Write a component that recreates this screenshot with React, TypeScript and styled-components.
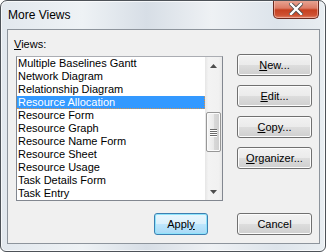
import styled, { createGlobalStyle } from 'styled-components'

const GlobalStyle = createGlobalStyle`
  html, body {
    margin: 0;
    padding: 0;
    background: #ffffff;
  }
  body {
    font-family: 'Liberation Sans', Arial, sans-serif;
    font-size: 11px;
    color: #000;
  }
`

const Window = styled.div`
  box-sizing: border-box;
  width: 326px;
  height: 252px;
  border: 1px solid #4d5258;
  border-radius: 7px 7px 6px 6px;
  background: linear-gradient(
    to right,
    #e2e8ee 0%,
    #eef2f5 25%,
    #d7dee6 45%,
    #eef1f4 65%,
    #dde4eb 85%,
    #e9eef2 100%
  );
  box-shadow: inset 0 0 0 1px rgba(255, 255, 255, 0.7);
  display: flex;
  flex-direction: column;
  overflow: hidden;
`

const TitleBar = styled.div`
  height: 28px;
  display: flex;
  justify-content: space-between;
  align-items: flex-start;
  padding-left: 7px;
`

const Title = styled.span`
  margin-top: 7px;
  font-size: 12px;
  color: #000;
`

const CloseButton = styled.div`
  box-sizing: border-box;
  width: 46px;
  height: 19px;
  margin-right: 6px;
  margin-top: -1px;
  border: 1px solid #6b2a1f;
  border-top: none;
  border-radius: 0 0 5px 5px;
  background: linear-gradient(
    to bottom,
    #e8a897 0%,
    #dc7c66 45%,
    #c6401f 55%,
    #cf5233 85%,
    #e0866a 100%
  );
  box-shadow: inset 0 0 0 1px rgba(255, 210, 200, 0.5);
  display: flex;
  align-items: center;
  justify-content: center;
`

const Client = styled.div`
  flex: 1;
  margin: 0 5px 7px 6px;
  border: 1px solid #8d949c;
  background: #f0f0f0;
  padding: 7px 6px 0 6px;
  display: flex;
  flex-direction: column;
`

const TopRow = styled.div`
  display: flex;
  align-items: flex-start;
`

const LeftColumn = styled.div`
  display: flex;
  flex-direction: column;
`

const Label = styled.div`
  line-height: 15px;
  height: 15px;
  margin-bottom: 4px;
`

const ListBox = styled.div`
  box-sizing: border-box;
  width: 207px;
  height: 145px;
  margin-left: 2px;
  border: 1px solid #828790;
  border-top-color: #abadb3;
  background: #ffffff;
  display: flex;
`

const Items = styled.div`
  flex: 1;
  display: flex;
  flex-direction: column;
`

const Item = styled.div<{ $selected?: boolean }>`
  box-sizing: border-box;
  height: 13px;
  line-height: 13px;
  padding-left: 1px;
  white-space: nowrap;
  color: ${({ $selected }) => ($selected ? '#ffffff' : '#000000')};
  background: ${({ $selected }) => ($selected ? '#3399ff' : 'transparent')};
  border: 1px dotted ${({ $selected }) => ($selected ? '#d8924a' : 'transparent')};
  border-left: none;
  border-top: none;
  line-height: 12px;
`

const ScrollBar = styled.div`
  width: 17px;
  display: flex;
  flex-direction: column;
  background: linear-gradient(to right, #e6e6e6 0%, #f3f3f3 20%, #f1f1f1 80%, #e8e8e8 100%);
`

const ArrowCell = styled.div`
  height: 17px;
  display: flex;
  align-items: center;
  justify-content: center;
`

const Track = styled.div`
  flex: 1;
  display: flex;
  flex-direction: column;
`

const Thumb = styled.div`
  box-sizing: border-box;
  margin-top: 38px;
  margin-left: 1px;
  width: 15px;
  height: 40px;
  border: 1px solid #979797;
  border-radius: 2px;
  background: linear-gradient(to right, #f6f6f6 0%, #eaeaea 50%, #d9d9d9 51%, #cfcfcf 100%);
  box-shadow: inset 0 0 0 1px #fbfbfb;
  display: flex;
  flex-direction: column;
  align-items: center;
  justify-content: center;
  gap: 1px;
`

const Grip = styled.div`
  width: 7px;
  height: 1px;
  background: #6a6a6a;
  box-shadow: 0 1px 0 #ffffff;
`

const ButtonColumn = styled.div`
  display: flex;
  flex-direction: column;
  gap: 9px;
  margin-left: 14px;
  margin-top: 17px;
`

const Button = styled.div<{ $width?: number; $primary?: boolean }>`
  box-sizing: border-box;
  width: ${({ $width }) => $width ?? 75}px;
  height: 22px;
  border: 1px solid ${({ $primary }) => ($primary ? '#3c7fb1' : '#707070')};
  border-radius: 3px;
  background: ${({ $primary }) =>
    $primary
      ? 'linear-gradient(to bottom, #eaf6fd 0%, #d9f0fc 50%, #bee6fd 51%, #a7d9f5 100%)'
      : 'linear-gradient(to bottom, #f2f2f2 0%, #ebebeb 50%, #dddddd 51%, #cfcfcf 100%)'};
  box-shadow: inset 0 0 0 1px ${({ $primary }) => ($primary ? '#8ee3fb' : '#fcfcfc')};
  display: flex;
  align-items: center;
  justify-content: center;
  line-height: 13px;
  color: #000;
`

const BottomRow = styled.div`
  display: flex;
  justify-content: flex-end;
  gap: 29px;
  margin-top: 12px;
  padding-right: 1px;
`

const views = [
  'Multiple Baselines Gantt',
  'Network Diagram',
  'Relationship Diagram',
  'Resource Allocation',
  'Resource Form',
  'Resource Graph',
  'Resource Name Form',
  'Resource Sheet',
  'Resource Usage',
  'Task Details Form',
  'Task Entry',
]

const App = () => {
  return (
    <>
      <GlobalStyle />
      <Window>
        <TitleBar>
          <Title>More Views</Title>
          <CloseButton>
            <svg width='14' height='12' viewBox='0 0 14 12'>
              <path
                d='M2 1 L12 11 M12 1 L2 11'
                stroke='#4a4a4a'
                strokeWidth='4'
                strokeLinecap='square'
              />
              <path
                d='M2 1 L12 11 M12 1 L2 11'
                stroke='#ffffff'
                strokeWidth='2.4'
                strokeLinecap='square'
              />
            </svg>
          </CloseButton>
        </TitleBar>
        <Client>
          <TopRow>
            <LeftColumn>
              <Label>
                <u>V</u>iews:
              </Label>
              <ListBox>
                <Items>
                  {views.map((v) => (
                    <Item key={v} $selected={v === 'Resource Allocation'}>
                      {v}
                    </Item>
                  ))}
                </Items>
                <ScrollBar>
                  <ArrowCell>
                    <svg width='7' height='4' viewBox='0 0 7 4'>
                      <path d='M0 4 L3.5 0 L7 4 Z' fill='#4d4d4d' />
                    </svg>
                  </ArrowCell>
                  <Track>
                    <Thumb>
                      <Grip />
                      <Grip />
                      <Grip />
                      <Grip />
                    </Thumb>
                  </Track>
                  <ArrowCell>
                    <svg width='7' height='4' viewBox='0 0 7 4'>
                      <path d='M0 0 L7 0 L3.5 4 Z' fill='#4d4d4d' />
                    </svg>
                  </ArrowCell>
                </ScrollBar>
              </ListBox>
            </LeftColumn>
            <ButtonColumn>
              <Button>
                <u>N</u>ew...
              </Button>
              <Button>
                <u>E</u>dit...
              </Button>
              <Button>
                <u>C</u>opy...
              </Button>
              <Button>
                <u>O</u>rganizer...
              </Button>
            </ButtonColumn>
          </TopRow>
          <BottomRow>
            <Button $width={54} $primary>
              Appl<u>y</u>
            </Button>
            <Button>Cancel</Button>
          </BottomRow>
        </Client>
      </Window>
    </>
  )
}

export default App
